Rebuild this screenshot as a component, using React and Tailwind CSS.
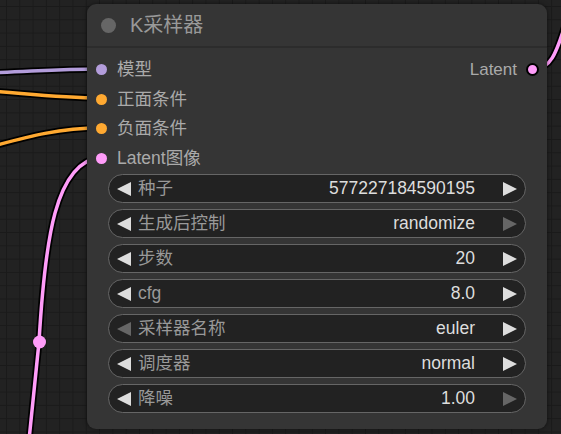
const FONT = "font-['Liberation_Sans','Noto_Sans_CJK_SC',sans-serif]"

const inputs = [
  { label: '模型', color: 'bg-[#b39ddb]' },
  { label: '正面条件', color: 'bg-[#ffa931]' },
  { label: '负面条件', color: 'bg-[#ffa931]' },
  { label: 'Latent图像', color: 'bg-[#ff9cf9]' },
]

const widgets = [
  { label: '种子', value: '577227184590195' },
  { label: '生成后控制', value: 'randomize', rightOff: true },
  { label: '步数', value: '20' },
  { label: 'cfg', value: '8.0' },
  { label: '采样器名称', value: 'euler', leftOff: true },
  { label: '调度器', value: 'normal' },
  { label: '降噪', value: '1.00', rightOff: true },
]

function Arrow({ dir, off }) {
  const fill = off ? '#666666' : '#dddddd'
  return (
    <svg width="15" height="14" viewBox="0 0 15 14" className="shrink-0">
      {dir === 'left' ? (
        <polygon points="0,7 14,0 14,14" fill={fill} />
      ) : (
        <polygon points="15,7 1,0 1,14" fill={fill} />
      )}
    </svg>
  )
}

function Widget({ label, value, leftOff, rightOff }) {
  return (
    <div className="flex h-[29px] items-center rounded-full border border-[#666] bg-[#222] pl-[8px] pr-[8px]">
      <Arrow dir="left" off={leftOff} />
      <span className="ml-[6px] text-[17.5px] leading-none text-[#999]">{label}</span>
      <span className="ml-auto mr-[27px] text-[17.5px] leading-none text-[#ddd]">{value}</span>
      <Arrow dir="right" off={rightOff} />
    </div>
  )
}

function Wires() {
  return (
    <svg className="absolute inset-0" width="561" height="434" viewBox="0 0 561 434">
      <g fill="none" strokeLinecap="round">
        <path d="M -10 73 C 40 71, 60 69, 101 69" stroke="#000" strokeWidth="7" />
        <path d="M -10 73 C 40 71, 60 69, 101 69" stroke="#b39ddb" strokeWidth="3.5" />
        <path d="M -10 91 C 30 94, 60 98, 101 98" stroke="#000" strokeWidth="7" />
        <path d="M -10 91 C 30 94, 60 98, 101 98" stroke="#ffa931" strokeWidth="3.5" />
        <path d="M -10 147 C 30 136, 60 128, 101 128" stroke="#000" strokeWidth="7" />
        <path d="M -10 147 C 30 136, 60 128, 101 128" stroke="#ffa931" strokeWidth="3.5" />
        <path d="M 101 157 C 55 162, 45 240, 39 342 L 29 440" stroke="#000" strokeWidth="7" />
        <path d="M 101 157 C 55 162, 45 240, 39 342 L 29 440" stroke="#ff9cf9" strokeWidth="3.5" />
        <path d="M 534 69 C 550 69, 556 55, 566 22" stroke="#000" strokeWidth="7" />
        <path d="M 534 69 C 550 69, 556 55, 566 22" stroke="#ff9cf9" strokeWidth="3.5" />
      </g>
      <circle cx="39.5" cy="342" r="6.5" fill="#ff9cf9" />
    </svg>
  )
}

export default function App() {
  return (
    <div
      className={`relative h-[434px] w-[561px] overflow-hidden bg-[#222] ${FONT} [background-image:linear-gradient(#1a1a1a_1px,transparent_1px),linear-gradient(90deg,#1a1a1a_1px,transparent_1px)] [background-position:6px_6px] [background-size:13.3px_13.3px]`}
    >
      <Wires />

      <div className="absolute left-[87px] top-[4px] flex h-[425px] w-[460px] flex-col rounded-[9px] bg-[#353535] shadow-[0_0_4px_rgba(0,0,0,0.5)]">
        <div className="flex h-[44px] items-center border-b-2 border-[#2c2c2c] pl-[14px]">
          <span className="h-[15px] w-[15px] rounded-full bg-[#666]" />
          <span className="ml-[14px] text-[20px] leading-none text-[#999]">K采样器</span>
        </div>

        <div className="flex flex-col pt-[7px]">
          {inputs.map((slot, i) => (
            <div key={slot.label} className="flex h-[29.5px] items-center pl-[9px] pr-[8px]">
              <span className={`h-[11px] w-[11px] rounded-full ${slot.color}`} />
              <span className="ml-[10px] text-[17.5px] leading-none text-[#aaa]">{slot.label}</span>
              {i === 0 && (
                <>
                  <span className="ml-auto text-[17px] leading-none text-[#aaa]">Latent</span>
                  <span className="ml-[9px] h-[13px] w-[13px] rounded-full border-2 border-black bg-[#ff9cf9]" />
                </>
              )}
            </div>
          ))}
        </div>

        <div className="mt-[1px] flex flex-col gap-[6px] px-[21px]">
          {widgets.map((w) => (
            <Widget key={w.label} {...w} />
          ))}
        </div>
      </div>
    </div>
  )
}
